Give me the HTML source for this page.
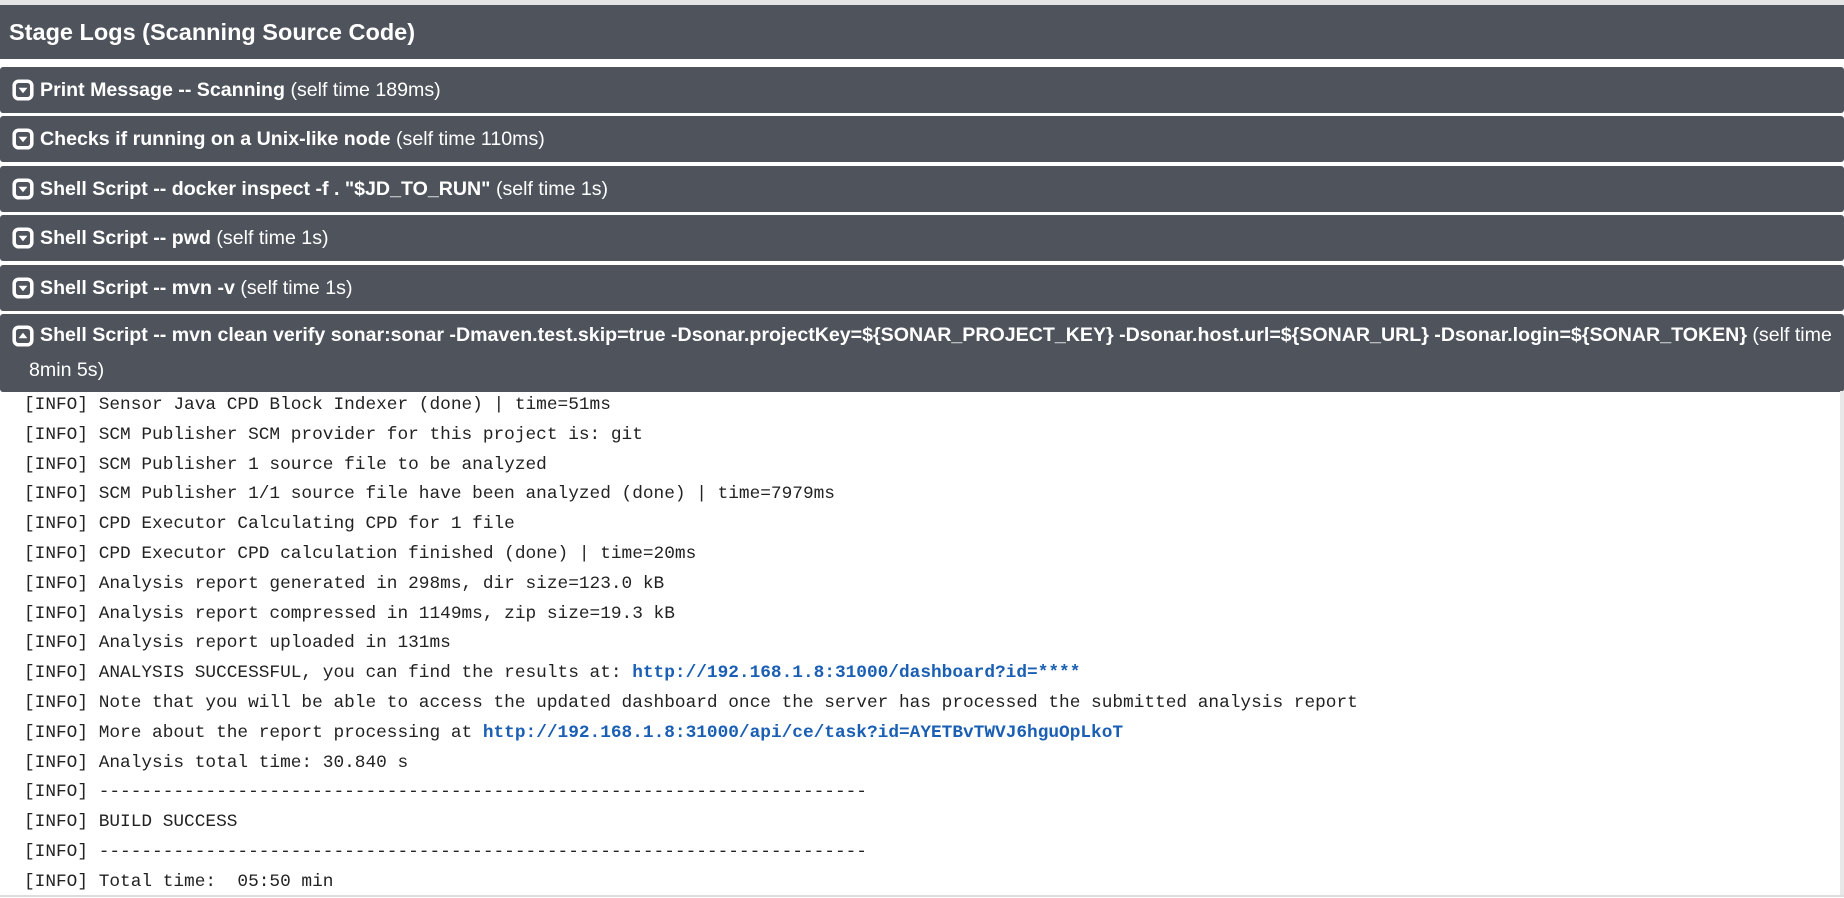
<!DOCTYPE html>
<html><head><meta charset="utf-8"><style>
body{margin:0;width:1844px;height:897px;overflow:hidden;background:#fff;font-family:"Liberation Sans",sans-serif;position:relative}
.top{position:absolute;left:0;top:0;width:1844px;height:5px;background:#e4e4e4}
.h{position:absolute;left:0;top:5px;width:1844px;height:54px;background:#4f545c;color:#fff;font-weight:bold;font-size:23.5px;line-height:54px;padding-left:9px;box-sizing:border-box}
.r{position:absolute;left:0;width:1844px;background:#4f545c;color:#fff;font-size:19.6px;line-height:46px;padding-left:40px;box-sizing:border-box;border-radius:3px;white-space:nowrap}
.r b{font-weight:bold}
.r i{font-style:normal}
.ic{position:absolute;left:12px;top:12px;width:22px;height:22px;border:none}
.log{position:absolute;left:24px;top:391px;font-family:"Liberation Mono",monospace;font-size:17.8px;line-height:29.8px;color:#222;white-space:pre}
.log a{color:#1a5fb4;font-weight:bold;text-decoration:none}
.sb{position:absolute;right:0;top:391px;width:4px;height:506px;background:#e8e8e8}
.bot{position:absolute;left:0;bottom:0;width:1844px;height:2px;background:#ddd}
</style></head><body>
<div class="top"></div>
<div class="h">Stage Logs (Scanning Source Code)</div>

<div class="r" style="top:67px;height:46px"><svg class="ic" viewBox="0 0 20 20"><rect x="2" y="2" width="16" height="16" rx="4" fill="none" stroke="#fff" stroke-width="3.2"/><path d="M6 8h8l-4 5z" fill="#fff"/></svg><b>Print Message -- Scanning</b> <i>(self time 189ms)</i></div>
<div class="r" style="top:116px;height:46px"><svg class="ic" viewBox="0 0 20 20"><rect x="2" y="2" width="16" height="16" rx="4" fill="none" stroke="#fff" stroke-width="3.2"/><path d="M6 8h8l-4 5z" fill="#fff"/></svg><b>Checks if running on a Unix-like node</b> <i>(self time 110ms)</i></div>
<div class="r" style="top:166px;height:46px"><svg class="ic" viewBox="0 0 20 20"><rect x="2" y="2" width="16" height="16" rx="4" fill="none" stroke="#fff" stroke-width="3.2"/><path d="M6 8h8l-4 5z" fill="#fff"/></svg><b>Shell Script -- docker inspect -f . "$JD_TO_RUN"</b> <i>(self time 1s)</i></div>
<div class="r" style="top:215px;height:46px"><svg class="ic" viewBox="0 0 20 20"><rect x="2" y="2" width="16" height="16" rx="4" fill="none" stroke="#fff" stroke-width="3.2"/><path d="M6 8h8l-4 5z" fill="#fff"/></svg><b>Shell Script -- pwd</b> <i>(self time 1s)</i></div>
<div class="r" style="top:265px;height:46px"><svg class="ic" viewBox="0 0 20 20"><rect x="2" y="2" width="16" height="16" rx="4" fill="none" stroke="#fff" stroke-width="3.2"/><path d="M6 8h8l-4 5z" fill="#fff"/></svg><b>Shell Script -- mvn -v</b> <i>(self time 1s)</i></div>
<div class="r" style="top:314px;height:78px;line-height:35px;padding-top:4px"><svg class="ic" viewBox="0 0 20 20" style="top:11px"><rect x="2" y="2" width="16" height="16" rx="4" fill="none" stroke="#fff" stroke-width="3.2"/><path d="M6 12h8l-4-5z" fill="#fff"/></svg><b>Shell Script -- mvn clean verify sonar:sonar -Dmaven.test.skip=true -Dsonar.projectKey=${SONAR_PROJECT_KEY} -Dsonar.host.url=${SONAR_URL} -Dsonar.login=${SONAR_TOKEN}</b> <i>(self time</i><br><i style="margin-left:-11px">8min 5s)</i></div>

<div class="log">[INFO] Sensor Java CPD Block Indexer (done) | time=51ms
[INFO] SCM Publisher SCM provider for this project is: git
[INFO] SCM Publisher 1 source file to be analyzed
[INFO] SCM Publisher 1/1 source file have been analyzed (done) | time=7979ms
[INFO] CPD Executor Calculating CPD for 1 file
[INFO] CPD Executor CPD calculation finished (done) | time=20ms
[INFO] Analysis report generated in 298ms, dir size=123.0 kB
[INFO] Analysis report compressed in 1149ms, zip size=19.3 kB
[INFO] Analysis report uploaded in 131ms
[INFO] ANALYSIS SUCCESSFUL, you can find the results at: <a>http://192.168.1.8:31000/dashboard?id=****</a>
[INFO] Note that you will be able to access the updated dashboard once the server has processed the submitted analysis report
[INFO] More about the report processing at <a>http://192.168.1.8:31000/api/ce/task?id=AYETBvTWVJ6hguOpLkoT</a>
[INFO] Analysis total time: 30.840 s
[INFO] ------------------------------------------------------------------------
[INFO] BUILD SUCCESS
[INFO] ------------------------------------------------------------------------
[INFO] Total time:  05:50 min</div>
<div class="sb"></div>
<div class="bot"></div>
</body></html>
